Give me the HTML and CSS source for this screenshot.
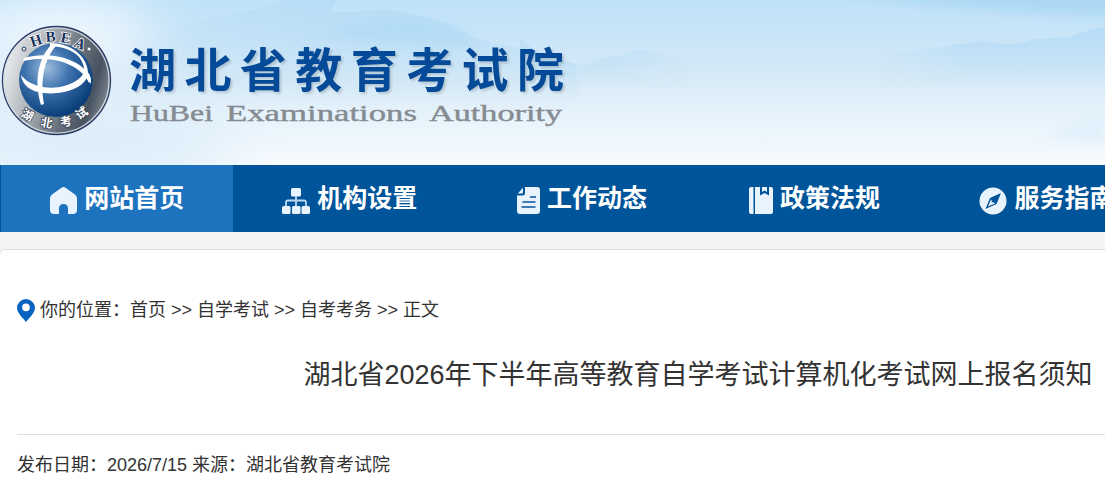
FILE: index.html
```html
<!DOCTYPE html>
<html lang="zh-CN">
<head>
    <meta charset="UTF-8">
    <title>湖北省教育考试院</title>
    <link rel="stylesheet" href="styles.css">
</head>
<body>
<header class="banner">
    <svg class="banner-bg" width="1105" height="165" viewBox="0 0 1105 165">
        <defs>
            <linearGradient id="sky" x1="0" y1="0" x2="0" y2="1">
                <stop offset="0" stop-color="#c0e2f8"/>
                <stop offset=".25" stop-color="#cbe5f8"/>
                <stop offset=".5" stop-color="#d9ebf7"/>
                <stop offset=".75" stop-color="#e9f4fc"/>
                <stop offset="1" stop-color="#f8fbfe"/>
            </linearGradient>
            <linearGradient id="hill" x1="0" y1="0" x2="0" y2="1">
                <stop offset="0" stop-color="#b4dbf5"/>
                <stop offset="1" stop-color="#b4dbf5" stop-opacity="0"/>
            </linearGradient>
            <linearGradient id="fade" x1="0" y1="0" x2="1" y2="0">
                <stop offset="0" stop-color="#000"/>
                <stop offset=".4" stop-color="#fff"/>
                <stop offset="1" stop-color="#fff"/>
            </linearGradient>
            <linearGradient id="fadeRight" x1="0" y1="0" x2="1" y2="0">
                <stop offset="0" stop-color="#fff"/>
                <stop offset=".6" stop-color="#fff"/>
                <stop offset="1" stop-color="#000"/>
            </linearGradient>
            <mask id="maskLeft"><rect x="130" width="450" height="165" fill="url(#fade)"/></mask>
            <mask id="maskRight"><rect x="870" width="235" height="165" fill="url(#fade)"/></mask>
            <mask id="maskMid"><rect x="480" width="220" height="165" fill="url(#fadeRight)"/></mask>
            <filter id="soft" x="-20%" y="-50%" width="140%" height="200%"><feGaussianBlur stdDeviation="6"/></filter>
            <filter id="haze" x="-100%" y="-150%" width="300%" height="400%"><feGaussianBlur stdDeviation="26"/></filter>
        </defs>
        <rect width="1105" height="165" fill="url(#sky)"/>
        <ellipse cx="60" cy="35" rx="95" ry="35" fill="#f0f8fe" filter="url(#haze)"/>
        <ellipse cx="90" cy="150" rx="150" ry="22" fill="#c8e4f6" opacity=".8" filter="url(#haze)"/>
        <g mask="url(#maskLeft)">
            <path d="M130 40C210 18 235 14 260 8L310 -8H340L330 12L360 12Q376 8 390 10C412 13 430 18 452 25C468 34 482 42 500 44C530 48 550 56 575 64L580 105H130Z" fill="url(#hill)" opacity=".75"/>
        </g>
        <path d="M320 34C370 18 420 14 455 28L480 44Q400 46 320 34Z" fill="#aedaf5" opacity=".7" filter="url(#soft)"/>
        <path d="M850 -14H1115V15Q1000 14 850 -5Z" fill="#abd8f4" filter="url(#soft)"/>
        <g mask="url(#maskMid)">
            <path d="M520 40C545 58 560 61 583 65C597 62 605 56 620 56C628 53 634 50 642 50C655 51 662 56 675 55Q690 60 700 66V90H520Z" fill="url(#hill)" opacity=".65"/>
        </g>
        <g mask="url(#maskRight)">
            <path d="M870 55C930 50 960 43 985 41C1000 44 1015 46 1035 39L1070 37C1080 32 1090 30 1105 27V90H870Z" fill="url(#hill)" opacity=".85"/>
        </g>
        <path d="M1045 136Q1080 120 1105 116V145Z" fill="#d9edf9" opacity=".6" filter="url(#soft)"/>
    </svg>
    <div class="brand">
        <svg class="emblem" width="112" height="112" viewBox="0 0 112 112">
            <defs>
                <linearGradient id="ring" x1="0" y1=".3" x2="1" y2=".6">
                    <stop offset="0" stop-color="#eef1f3"/>
                    <stop offset=".3" stop-color="#b4bac0"/>
                    <stop offset=".65" stop-color="#66717c"/>
                    <stop offset=".85" stop-color="#46525e"/>
                    <stop offset="1" stop-color="#7d8892"/>
                </linearGradient>
                <radialGradient id="globe" cx=".38" cy=".34" r=".68">
                    <stop offset="0" stop-color="#9dbddc"/>
                    <stop offset=".45" stop-color="#3c71ae"/>
                    <stop offset="1" stop-color="#083c79"/>
                </radialGradient>
            </defs>
            <circle cx="56.500" cy="55.500" r="54" fill="url(#ring)" stroke="#2c3c66" stroke-width="1.300"/>
            <circle cx="56.500" cy="55.500" r="52.500" fill="none" stroke="#d4dbe2" stroke-width="1.200"/>
            <circle cx="56" cy="55" r="37" fill="url(#globe)"/>
            <g fill="#fff">
                <path d="M24 33C52 25 84 35 91 54L89 58C82 41 55 29 23 36Z"/>
                <path d="M52 19C40 31 33 53 41 80L44 79C40 56 44 33 57 20Z"/>
                <path d="M50 18C75 18 89 35 88 50C84 64 62 70 44 68C31 67 22 60 21 50C30 62 50 65 64 61C77 57 85 51 84 43C82 30 70 22 50 21Z"/>
                <path d="M84 45C90 47 91 52 91 59L86 52Z"/>
            </g>
            <g class="emblem-latin">
                <text transform="translate(32 22) rotate(-18)">H</text>
                <text transform="translate(46 17) rotate(-5)">B</text>
                <text transform="translate(60 17) rotate(10)">E</text>
                <text transform="translate(73 21) rotate(24)">A</text>
            </g>
            <g class="emblem-cn">
                <text transform="translate(20 91) rotate(28)">湖</text>
                <text transform="translate(40 101) rotate(10)">北</text>
                <text transform="translate(61 102) rotate(-12)">考</text>
                <text transform="translate(79 95) rotate(-34)">试</text>
            </g>
            <circle cx="24" cy="24" r="2" fill="#dce2e6" stroke="#29405f"/>
            <circle cx="89" cy="24" r="1.800" fill="#fff" stroke="#4c5968" stroke-width=".5"/>
        </svg>
        <svg class="brand-text" width="450" height="95" viewBox="0 0 450 95">
            <text class="brand-cn" x="3" y="50" textLength="435">湖北省教育考试院</text>
            <g class="brand-en">
                <text x="4" y="84" textLength="83" lengthAdjust="spacingAndGlyphs">HuBei</text>
                <text x="100" y="84" textLength="191" lengthAdjust="spacingAndGlyphs">Examinations</text>
                <text x="303" y="84" textLength="133" lengthAdjust="spacingAndGlyphs">Authority</text>
            </g>
        </svg>
    </div>
</header>

<nav class="nav">
    <a class="nav-item active">
        <svg width="27" height="27" viewBox="0 0 27 27"><path fill="#e8f3fd" d="M11.500.7Q13.500-.5 15.500.7L25 7.500Q27 9 27 11V23Q27 27 23 27H18V21.500Q18 17 13.500 17T9 21.500V27H4Q0 27 0 23V11Q0 9 2 7.500Z"/></svg>
        <span>网站首页</span>
    </a>
    <a class="nav-item">
        <svg width="28" height="27" viewBox="0 0 28 27"><g fill="#e8f3fd"><rect x="9" y="1" width="10" height="8.500" rx="1.500"/><rect x="0" y="19" width="8.500" height="8" rx="1.500"/><rect x="10" y="19" width="8.500" height="8" rx="1.500"/><rect x="19.500" y="19" width="8.500" height="8" rx="1.500"/></g><path d="M14 9V19M4 19V15.500Q4 13.500 6 13.500H22Q24 13.500 24 15.500V19" fill="none" stroke="#bdd9f2" stroke-width="1.800"/></svg>
        <span>机构设置</span>
    </a>
    <a class="nav-item">
        <svg width="23" height="27" viewBox="0 0 23 27"><path fill="#e8f3fd" d="M8 0H20Q23 0 23 3V24Q23 27 20 27H3Q0 27 0 24V8.500H5.500Q8 8.500 8 6ZM6 .8V5Q6 6.500 4.500 6.500H.8Z"/><path d="M13 10H19M5.500 15H18.500M4.500 20H18.500" stroke="#3d7cb8" stroke-width="1.900"/></svg>
        <span>工作动态</span>
    </a>
    <a class="nav-item">
        <svg width="24" height="27" viewBox="0 0 24 27"><path fill="#e8f3fd" d="M2 0H4.500V27H2Q0 27 0 25V2Q0 0 2 0ZM6 0H11V8.500L15.500 6L20 8.500V0H22Q24 0 24 2V25Q24 27 22 27H6ZM13 0H18V5L15.500 3.500L13 5Z"/></svg>
        <span>政策法规</span>
    </a>
    <a class="nav-item">
        <svg width="28" height="28" viewBox="0 0 28 28"><circle cx="14" cy="14" r="13.500" fill="#e8f3fd"/><path d="M22 6L17.500 17L6.500 22L11 11Z" fill="#005499"/><path d="M9 19.500L12 12.500L16 16.500Z" fill="#e8f3fd"/><circle cx="14" cy="14" r="1.400" fill="#005499"/></svg>
        <span>服务指南</span>
    </a>
</nav>

<main class="content">
    <div class="position">
        <svg width="18" height="23" viewBox="0 0 18 23"><path fill="#0864c0" fill-rule="evenodd" d="M9 0A9 9 0 0 1 18 9C18 14 12 19 9 23C6 19 0 14 0 9A9 9 0 0 1 9 0ZM9 4.600A3.800 3.800 0 1 0 9 12.200A3.800 3.800 0 1 0 9 4.600Z"/></svg>
        <span>你的位置：<a>首页</a> &gt;&gt; <a>自学考试</a> &gt;&gt; <a>自考考务</a> &gt;&gt; 正文</span>
    </div>
    <h1 class="title">湖北省2026年下半年高等教育自学考试计算机化考试网上报名须知</h1>
    <div class="info">发布日期：2026/7/15 来源：湖北省教育考试院</div>
</main>
</body>
</html>
```
FILE: styles.css
```css
body {
    margin: 0;
    height: 489px;
    overflow: hidden;
    background-color: #f4f4f4;
    color: #333;
    font-family: "Liberation Sans", "Noto Sans CJK SC", sans-serif;
}
.banner {
    position: relative;
    height: 165px;
    overflow: hidden;
}
.banner-bg {
    position: absolute;
    top: 0;
    left: 0;
}
.brand {
    position: relative;
    display: flex;
    gap: 14px;
    padding-top: 25px;
}
.brand-text {
    margin-top: 12px;
    overflow: visible;
}
.brand-cn {
    font-family: "Noto Sans CJK SC", sans-serif;
    font-size: 47px;
    font-weight: bold;
    fill: #054a99;
    filter: drop-shadow(2px 2px 1px rgba(0,0,0,0.15));
}
.brand-en {
    font-family: "Liberation Serif", serif;
    font-size: 24px;
    fill: #858b90;
    stroke: #858b90;
    stroke-width: 0.4;
}
.emblem-latin {
    font: bold 15px "Liberation Serif", serif;
    fill: #19345c;
    stroke: #fff;
    stroke-width: 1.5;
    paint-order: stroke;
}
.emblem-cn {
    font: bold 12px "Noto Sans CJK SC", sans-serif;
    fill: #fff;
    stroke: #384657;
    stroke-width: 1.5;
    paint-order: stroke;
}
.nav {
    display: flex;
    height: 67px;
    padding-left: 1px;
    overflow: hidden;
    background-color: #005499;
}
.nav-item {
    display: flex;
    flex: none;
    justify-content: center;
    align-items: center;
    gap: 7px;
    width: 232.45px;
    color: #fff;
    font-size: 25px;
    font-weight: bold;
    line-height: 67px;
}
.nav-item svg {
    margin-top: 4px;
}
.active {
    background-color: #1e73be;
}
.content {
    box-sizing: border-box;
    width: 1398px;
    height: 260px;
    margin: 17px 0 0 -1px;
    padding: 48px 17px 0;
    border: 1px solid #ddd;
    border-radius: 6px;
    background-color: #fff;
}
.position {
    display: flex;
    align-items: center;
    gap: 5px;
    height: 24px;
    font-size: 18px;
}
.position span {
    margin-top: -4px;
}
.title {
    margin: 33px 0 0;
    font-size: 27px;
    font-weight: normal;
    line-height: 40px;
    text-align: center;
}
.info {
    margin-top: 39px;
    padding-top: 18px;
    border-top: 1px solid #ddd;
    font-size: 18px;
    line-height: 24px;
}
```
